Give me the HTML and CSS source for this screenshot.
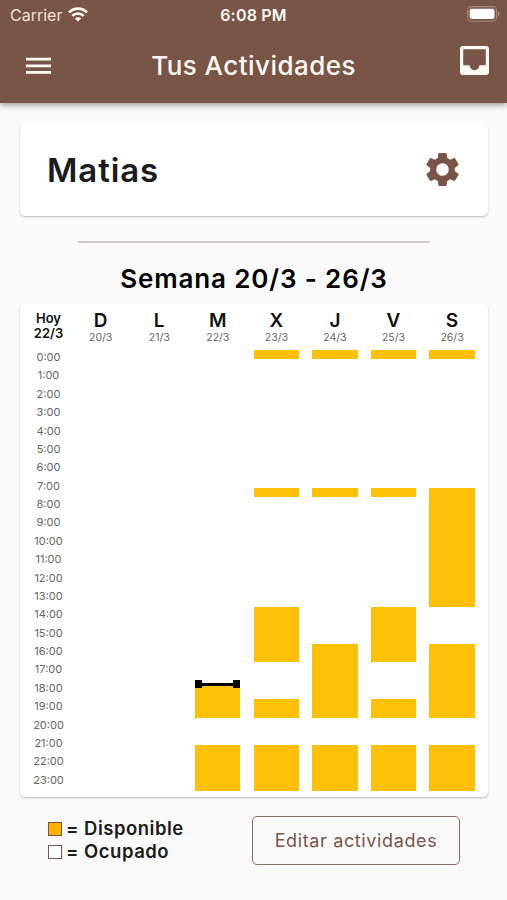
FILE: index.html
```html
<!DOCTYPE html>
<html lang="es">
<head>
<meta charset="utf-8">
<title>Tus Actividades</title>
<link rel="stylesheet" href="styles.css">
</head>
<body>
<header class="top">
  <div class="status">
    <div class="carrier"><span>Carrier</span>
      <svg class="wifi" viewBox="0 0 20 15"><g fill="none" stroke="currentColor" stroke-width="2.7"><path d="M1 5.4C6 .3 14 .3 19 5.4"/><path d="M4.3 8.9c3.2-3.2 8.2-3.2 11.4 0"/></g><path fill="currentColor" d="M6.9 11.4c1.8-1.6 4.4-1.6 6.2 0L10 14.6z"/></svg>
    </div>
    <span class="time">6:08 PM</span>
    <svg class="battery" viewBox="0 0 33 16"><rect x=".6" y=".6" width="29" height="14.6" rx="4" fill="none" stroke="#a48a7f" stroke-width="1.1"/><rect x="2.7" y="2.8" width="24.8" height="10.2" rx="2.2" fill="#fff"/><path d="M31 5.5c1.8.7 1.8 4.2 0 4.9z" fill="#a48a7f"/></svg>
  </div>
  <nav class="bar">
    <svg class="menu" viewBox="0 0 25 18"><path fill="currentColor" d="M0 .8h25v2.8H0zM0 7.4h25v2.8H0zM0 14h25v2.8H0z"/></svg>
    <h1>Tus Actividades</h1>
    <svg class="inbox" viewBox="3 3 18 18"><path fill="currentColor" d="M19 3H5a2 2 0 0 0-2 2v14a2 2 0 0 0 2 2h14a2 2 0 0 0 2-2V5a2 2 0 0 0-2-2zm0 12h-4c0 1.66-1.34 3-3 3s-3-1.34-3-3H5V5h14z"/></svg>
  </nav>
</header>
<main>
  <section class="card person">
    <h2>Matias</h2>
    <svg class="gear" viewBox="2 2 20 20"><path fill="currentColor" d="M19.43 12.98c.04-.32.07-.64.07-.98s-.03-.66-.07-.98l2.11-1.65c.19-.15.24-.42.12-.64l-2-3.46c-.12-.22-.39-.3-.61-.22l-2.49 1c-.52-.4-1.08-.73-1.69-.98l-.38-2.65A.488.488 0 0 0 14 2h-4c-.25 0-.46.18-.49.42l-.38 2.65c-.61.25-1.17.59-1.69.98l-2.49-1c-.23-.09-.49 0-.61.22l-2 3.46c-.13.22-.07.49.12.64l2.11 1.65c-.04.32-.07.65-.07.98s.03.66.07.98l-2.11 1.65c-.19.15-.24.42-.12.64l2 3.46c.12.22.39.3.61.22l2.49-1c.52.4 1.08.73 1.69.98l.38 2.65c.03.24.24.42.49.42h4c.25 0 .46-.18.49-.42l.38-2.65c.61-.25 1.17-.59 1.69-.98l2.49 1c.23.09.49 0 .61-.22l2-3.46c.12-.22.07-.49-.12-.64zM12 15.8a3.8 3.8 0 1 1 0-7.6 3.8 3.8 0 0 1 0 7.6z"/></svg>
  </section>
  <hr>
  <h3>Semana 20/3 - 26/3</h3>
  <section class="card week">
    <div class="hours">
      <div class="today">Hoy<br>22/3</div>
      <ol>
        <li>0:00</li><li>1:00</li><li>2:00</li><li>3:00</li><li>4:00</li><li>5:00</li><li>6:00</li><li>7:00</li><li>8:00</li><li>9:00</li><li>10:00</li><li>11:00</li><li>12:00</li><li>13:00</li><li>14:00</li><li>15:00</li><li>16:00</li><li>17:00</li><li>18:00</li><li>19:00</li><li>20:00</li><li>21:00</li><li>22:00</li><li>23:00</li>
      </ol>
    </div>
    <div class="day"><div class="head"><b>D</b><small>20/3</small></div><div class="slots"></div></div>
    <div class="day"><div class="head"><b>L</b><small>21/3</small></div><div class="slots"></div></div>
    <div class="day"><div class="head"><b>M</b><small>22/3</small></div><div class="slots"><i class="current"><span class="now"></span></i><i class="night"></i></div></div>
    <div class="day"><div class="head"><b>X</b><small>23/3</small></div><div class="slots"><i class="midnight"></i><i class="morning"></i><i class="afternoon"></i><i class="evening"></i><i class="night"></i></div></div>
    <div class="day"><div class="head"><b>J</b><small>24/3</small></div><div class="slots"><i class="midnight"></i><i class="morning"></i><i class="late"></i><i class="night"></i></div></div>
    <div class="day"><div class="head"><b>V</b><small>25/3</small></div><div class="slots"><i class="midnight"></i><i class="morning"></i><i class="afternoon"></i><i class="evening"></i><i class="night"></i></div></div>
    <div class="day"><div class="head"><b>S</b><small>26/3</small></div><div class="slots"><i class="midnight"></i><i class="long"></i><i class="late"></i><i class="night"></i></div></div>
  </section>
  <footer>
    <div class="legend">
      <div><span class="swatch free"></span>= Disponible</div>
      <div><span class="swatch"></span>= Ocupado</div>
    </div>
    <button>Editar actividades</button>
  </footer>
</main>
</body>
</html>
```
FILE: styles.css
```css
* { box-sizing: border-box; }
body {
  margin: 0;
  height: 900px;
  overflow: hidden;
  background: #fafafa;
  color: #1c1c1c;
  font-family: Inter, "Liberation Sans", sans-serif;
}
svg { display: block; flex: none; }
h1, h2, h3 { margin: 0; white-space: nowrap; }

.top {
  height: 103px;
  background: #795548;
  color: #fffaf5;
  box-shadow: 0 2px 6px rgba(0, 0, 0, .4);
}
.status {
  display: grid;
  grid-template-columns: 1fr auto 1fr;
  align-items: center;
  height: 30px;
  padding: 0 7px 0 10px;
  font-size: 16px;
}
.carrier { display: flex; align-items: center; gap: 6px; color: #eee0d8; letter-spacing: 0; }
.wifi { width: 20px; height: 15px; margin-top: -1px; color: #fffaf5; }
.time { margin-right: 3px; font-weight: 600; letter-spacing: .2px; }
.battery { width: 33px; height: 16px; justify-self: end; margin-top: -2px; }
.bar {
  display: grid;
  grid-template-columns: 1fr auto 1fr;
  align-items: center;
  height: 72px;
  padding: 0 18px 0 26px;
}
.menu { width: 25px; height: 18px; }
.bar h1 { font-size: 26px; font-weight: 500; letter-spacing: .45px; margin: -1px 8px 0 0; }
.inbox { width: 29px; height: 29px; justify-self: end; margin-top: -11px; }

main { padding: 21px 19px 0 20px; }
.card {
  background: #fff;
  border-radius: 5px;
  box-shadow: 0 1px 2px rgba(0, 0, 0, .26);
}
.person {
  display: flex;
  align-items: center;
  justify-content: space-between;
  height: 92px;
  padding: 0 29px 0 27px;
}
.person h2 { font-size: 33px; font-weight: 600; letter-spacing: .9px; }
.gear { width: 33px; height: 33px; margin-top: -2px; color: #795548; }
hr { width: 352px; height: 2px; margin: 25px auto 20px 58px; border: 0; background: #d5c8c6; }
h3 {
  height: 41px;
  line-height: 32px;
  text-align: center;
  color: #000;
  font-size: 26px;
  font-weight: 600;
  letter-spacing: .85px;
}
.week {
  display: grid;
  grid-template-columns: 51.4px repeat(7, 58.57px);
  height: 493px;
  color: #111;
}
.hours { width: 57px; text-align: center; }
.today { height: 46px; padding-top: 7px; font-size: 13px; font-weight: 600; line-height: 15px; letter-spacing: 0; }
.hours ol { margin: 0; padding: 0; list-style: none; }
.hours li { height: 18.38px; line-height: 15px; font-size: 11px; color: #666; }
.head { display: flex; flex-direction: column; align-items: center; height: 46px; padding-top: 6px; }
.head b { font-size: 19px; line-height: 22px; font-weight: 600; }
.head small { font-size: 10.5px; line-height: 11px; color: #666; }
.slots {
  display: grid;
  grid-template-rows: repeat(48, 9.19px);
  padding: 0 6.7px;
}
.slots i { background: #ffc107; }
.midnight { grid-row: 1 / 2; }
.morning { grid-row: 16 / 17; }
.long { grid-row: 16 / 29; }
.afternoon { grid-row: 29 / 35; }
.late { grid-row: 33 / 41; }
.evening { grid-row: 39 / 41; }
.night { grid-row: 44 / 49; }
.current { grid-row: 37 / 41; margin-top: 3.5px; }
.now {
  display: flex;
  align-items: center;
  justify-content: space-between;
  height: 8px;
  margin-top: -4px;
  background: linear-gradient(#000, #000) center / 100% 3px no-repeat;
}
.now::before, .now::after { content: ""; width: 7px; height: 8px; background: #000; }

footer { display: flex; justify-content: space-between; padding: 19px 28px 0 28px; }
.legend { padding-top: 1px; font-size: 18.5px; font-weight: 600; line-height: 23px; letter-spacing: .5px; }
.legend div { display: flex; align-items: center; gap: 4px; }
.swatch { width: 14px; height: 14px; border: 1px solid #795548; background: #fff; }
.swatch.free { background: #ffb300; }
button {
  width: 208px;
  height: 49px;
  padding: 0;
  border: 1.5px solid #8d6e63;
  border-radius: 5px;
  background: transparent;
  color: #795548;
  font: 400 18px Inter, "Liberation Sans", sans-serif;
  letter-spacing: .63px;
}
```
